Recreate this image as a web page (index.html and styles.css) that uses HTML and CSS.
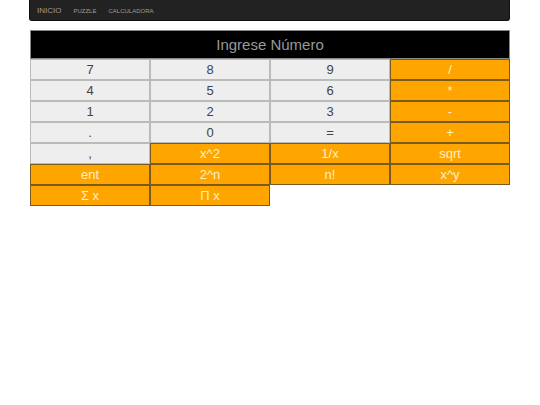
FILE: index.html
```html
<!DOCTYPE html>
<html>
  <head>
    <meta name="viewport" content="width=device-width, initial-scale=1" />
    <title>Calculadora</title>
    <link rel="stylesheet" href="styles.css">
  </head>
  <body>
    <div class="page">
      <div class="navbar">
        <a class="brand" href="#">INICIO</a>
        <a class="nav-link" href="#">PUZZLE</a>
        <a class="nav-link" href="#">CALCULADORA</a>
      </div>

      <div class="calc">
        <div id="display" class="display">Ingrese Número</div>
        <div class="keys">
          <button class="key">7</button>
          <button class="key">8</button>
          <button class="key">9</button>
          <button class="key op">/</button>
          <button class="key">4</button>
          <button class="key">5</button>
          <button class="key">6</button>
          <button class="key op">*</button>
          <button class="key">1</button>
          <button class="key">2</button>
          <button class="key">3</button>
          <button class="key op">-</button>
          <button class="key">.</button>
          <button class="key">0</button>
          <button class="key">=</button>
          <button class="key op">+</button>
          <button class="key">,</button>
          <button class="key op">x^2</button>
          <button class="key op">1/x</button>
          <button class="key op">sqrt</button>
          <button class="key op">ent</button>
          <button class="key op">2^n</button>
          <button class="key op">n!</button>
          <button class="key op">x^y</button>
          <button class="key op">&Sigma; x</button>
          <button class="key op">&Pi; x</button>
        </div>
      </div>
    </div>
  </body>
</html>
```
FILE: styles.css
```css
body {
  margin: 0;
  background-color: white;
  font-family: "Liberation Sans", Arial, sans-serif;
}
.page {
  width: 481px;
  margin-left: 29px;
}
.navbar {
  height: 21px;
  background-color: #222;
  border: 1px solid #111;
  border-top: none;
  border-radius: 0 0 3px 3px;
  display: flex;
  align-items: center;
  padding-left: 7px;
  padding-top: 1px;
  box-sizing: border-box;
}
.navbar a {
  text-decoration: none;
  color: #9d9d9d;
}
.brand {
  font-size: 8px;
  margin-right: 12px;
}
.nav-link {
  font-size: 6px;
  margin-right: 12px;
}
.calc {
  margin-top: 9px;
  margin-left: 1px;
  width: 480px;
}
.display {
  height: 29px;
  box-sizing: border-box;
  background-color: black;
  border: 1px solid #888;
  color: #999;
  font-size: 15px;
  line-height: 27px;
  text-align: center;
}
.keys {
  display: grid;
  grid-template-columns: repeat(4, 120px);
  grid-auto-rows: 21px;
}
.key {
  margin: 0;
  padding: 0;
  font-family: "Liberation Sans", Arial, sans-serif;
  font-size: 13px;
  background-color: #eee;
  color: #444;
  border: 1px solid #bbb;
  border-radius: 0;
  cursor: pointer;
}
.key.op {
  background-color: orange;
  color: #ffeec8;
  border-color: #7a5a1e;
}
```
